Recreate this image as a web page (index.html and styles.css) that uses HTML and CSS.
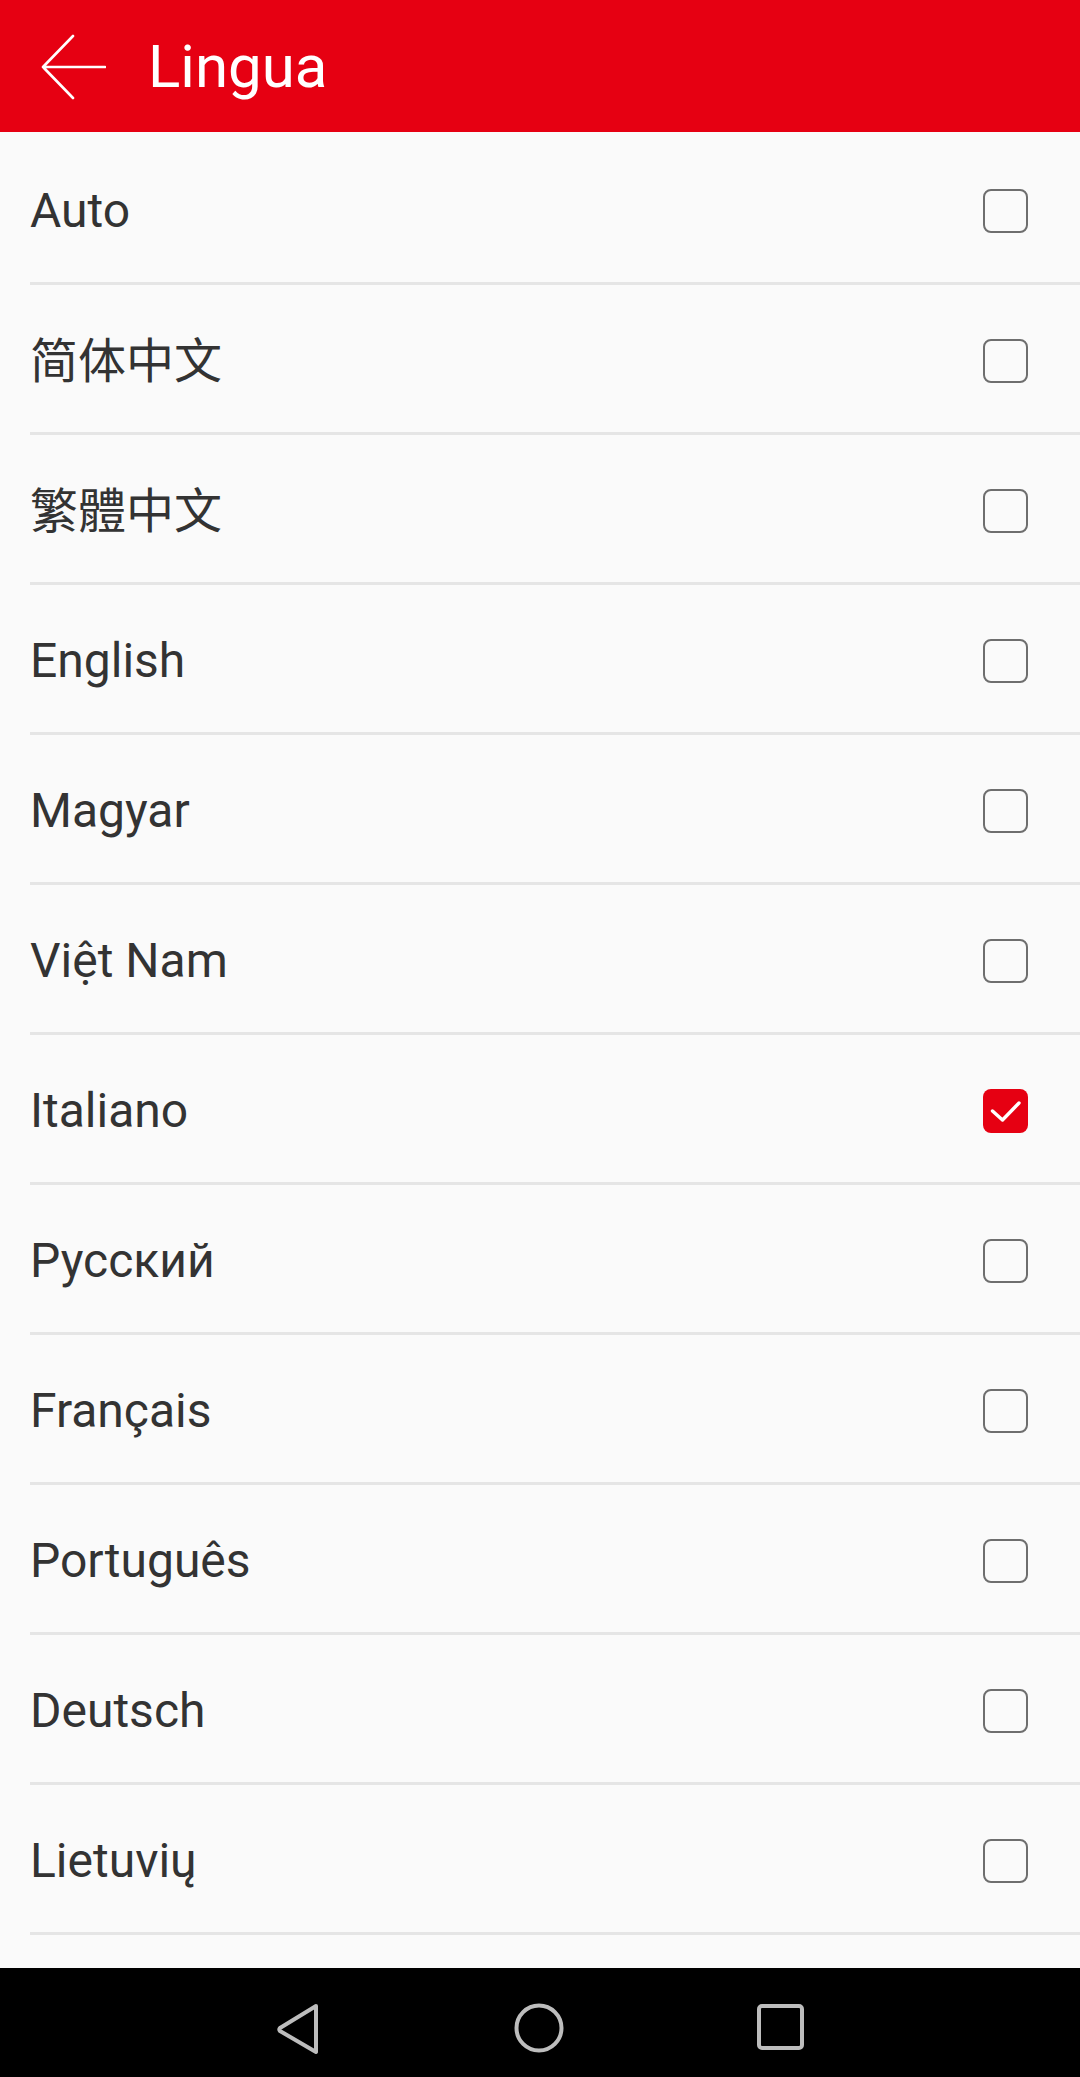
FILE: index.html
```html
<!DOCTYPE html>
<html lang="it">
<head>
<meta charset="utf-8">
<title>Lingua</title>
<link rel="stylesheet" href="styles.css">
</head>
<body>
<div class="screen">
  <header class="appbar">
    <svg class="back" width="66" height="66" viewBox="0 0 66 66" aria-hidden="true">
      <path d="M65 33 H3 M33 2 L3 33 L33 64" fill="none" stroke="#fff" stroke-width="2.6" stroke-linecap="round" stroke-linejoin="round"/>
    </svg>
    <h1 class="title">Lingua</h1>
  </header>
  <main class="list">
    <div class="row"><span class="label">Auto</span><span class="box"></span></div>
    <div class="row"><span class="label cjk-sc">简体中文</span><span class="box"></span></div>
    <div class="row"><span class="label cjk-tc">繁體中文</span><span class="box"></span></div>
    <div class="row"><span class="label">English</span><span class="box"></span></div>
    <div class="row"><span class="label">Magyar</span><span class="box"></span></div>
    <div class="row"><span class="label">Việt Nam</span><span class="box"></span></div>
    <div class="row"><span class="label">Italiano</span><span class="box checked"><svg width="45" height="44" viewBox="0 0 45 44"><path d="M9.5 22 L19.5 31 L36 14" fill="none" stroke="#fff" stroke-width="3.4" stroke-linecap="round" stroke-linejoin="round"/></svg></span></div>
    <div class="row"><span class="label">Русский</span><span class="box"></span></div>
    <div class="row"><span class="label">Français</span><span class="box"></span></div>
    <div class="row"><span class="label">Português</span><span class="box"></span></div>
    <div class="row"><span class="label">Deutsch</span><span class="box"></span></div>
    <div class="row"><span class="label">Lietuvių</span><span class="box"></span></div>
  </main>
  <nav class="navbar">
    <svg width="44" height="52" viewBox="0 0 44 52" aria-hidden="true"><path d="M39 3 L3 25 Q1.5 26.5 3 28 L39 49 Z" fill="none" stroke="#bdbdbd" stroke-width="4" stroke-linejoin="round"/></svg>
    <svg width="52" height="52" viewBox="0 0 52 52" aria-hidden="true"><circle cx="26" cy="26" r="22.5" fill="none" stroke="#bdbdbd" stroke-width="4"/></svg>
    <svg width="48" height="48" viewBox="0 0 48 48" aria-hidden="true"><rect x="2" y="2" width="43" height="42" rx="3" fill="none" stroke="#bdbdbd" stroke-width="4"/></svg>
  </nav>
</div>
</body>
</html>
```
FILE: styles.css
```css
* { box-sizing: border-box; }
html, body { margin: 0; padding: 0; }
body {
  width: 1080px;
  height: 2077px;
  background: #fafafa;
  font-family: Roboto, "Noto Sans", "Noto Sans CJK SC", sans-serif;
  overflow: hidden;
}
.screen {
  display: flex;
  flex-direction: column;
  height: 2077px;
}
.appbar {
  height: 132px;
  flex: none;
  background: #e60012;
  display: flex;
  align-items: center;
  padding-left: 40px;
}
.back { flex: none; margin-top: 1px; }
.title {
  margin: 0 0 0 42px;
  font-weight: 400;
  font-size: 60px;
  color: #fff;
  line-height: 1;
  margin-top: 2px;
}
.list {
  flex: 1;
  padding-top: 3px;
}
.row {
  height: 150px;
  margin-left: 30px;
  padding-right: 52px;
  padding-top: 4px;
  border-bottom: 3px solid #e5e5e5;
  display: flex;
  align-items: center;
  justify-content: space-between;
}
.label {
  font-size: 48px;
  color: #333;
  line-height: 1;
}
.cjk-sc { font-family: "Noto Sans CJK SC", sans-serif; font-size: 48px; margin-bottom: 7px; }
.cjk-tc { font-family: "Noto Sans CJK TC", sans-serif; font-size: 48px; margin-bottom: 7px; }
.box {
  width: 45px;
  height: 44px;
  border: 2.5px solid #6e6e6e;
  border-radius: 8px;
  flex: none;
}
.box.checked {
  border: none;
  background: #e60012;
  display: block;
}
.box.checked svg { display: block; }
.navbar {
  height: 109px;
  flex: none;
  background: #000;
  display: flex;
  align-items: center;
  padding-left: 277px;
  padding-top: 10px;
}
.navbar svg { display: block; flex: none; }
.navbar svg:nth-child(1) { margin-top: 2px; }
.navbar svg:nth-child(2) { margin-left: 192px; }
.navbar svg:nth-child(3) { margin-left: 192px; }
```
